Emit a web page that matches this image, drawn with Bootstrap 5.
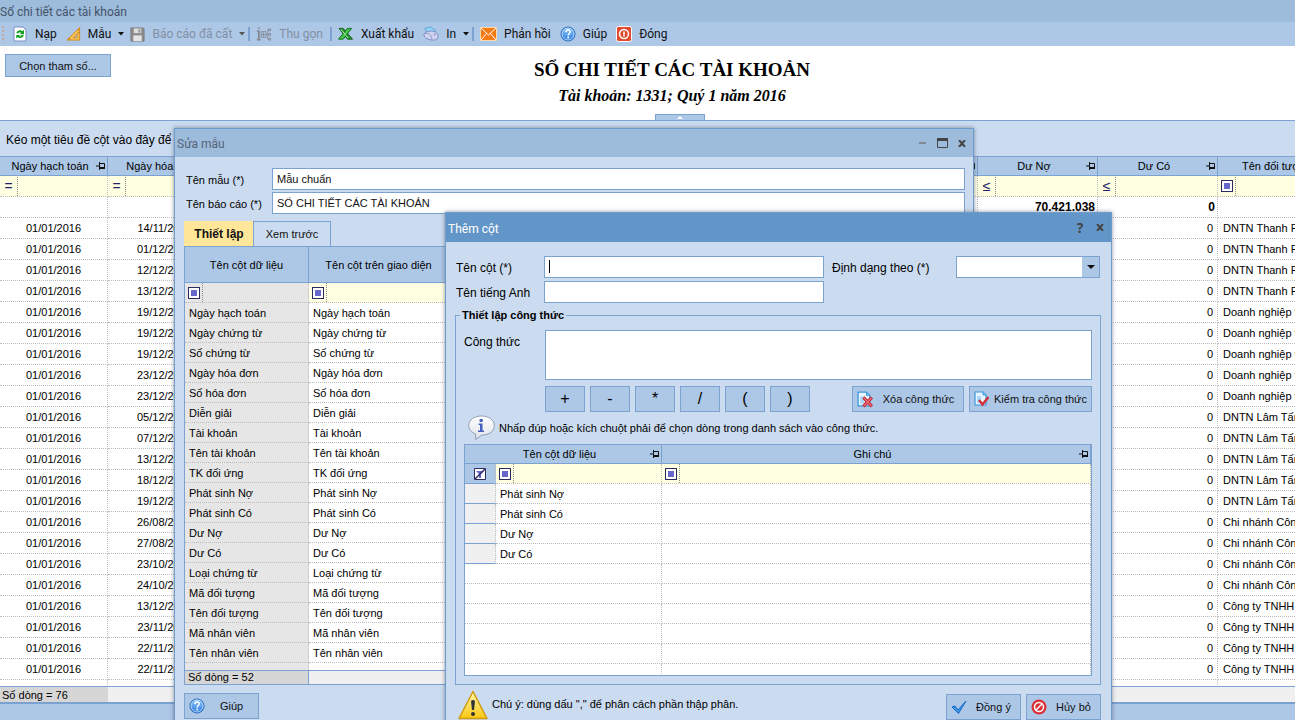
<!DOCTYPE html>
<html lang="vi">
<head>
<meta charset="utf-8">
<meta name="viewport" content="width=device-width, initial-scale=1">
<title>Sổ chi tiết các tài khoản</title>
<link href="https://cdn.jsdelivr.net/npm/bootstrap@5.3.0/dist/css/bootstrap.min.css" rel="stylesheet">
<style>
:root{--line:#7ca2d1;--bar:#adc7e7;--panel:#cbdbf0;--cap:#9dbbdb;--filter:#ffffe1;--dot:#bdbdbd}
body{font-family:"Liberation Sans",Arial,sans-serif;font-size:11px;line-height:16px;color:#000;background:#fff}
.app{height:100vh;min-height:0}
.seg{font-family:Roboto,"Open Sans",sans-serif;font-size:12px}
.caption-main{background:var(--cap);height:22px;color:#44546a;line-height:24px}
.tools{background:var(--bar);height:24px;padding-left:1px}
.tools svg{flex:none}
.tool{background:none;border:0;padding:0;margin-left:9px;color:#111;display:flex;align-items:center;gap:7px;line-height:22px}
.tool.first{margin-left:7px}
.tool.near{margin-left:6px}
.tool:disabled{color:#8390a2}
.vline{width:2px;height:14px;background:var(--line);margin-left:7px}
.vline.near{margin-left:3px}
.grip{width:4px;height:18px;background:radial-gradient(circle,#c3a9a0 1px,transparent 1px) 0 0/4px 4px}
.flat{background:var(--bar);border:1px solid var(--line);border-radius:0;color:#111;font-size:11px;line-height:16px;padding:0;height:26px}
.flat:hover{background:#bcd3ee;border-color:var(--line);color:#111}
.flat.param{width:106px;height:23px;margin:8px 0 0 5px}
.report-head{height:75px;border-bottom:1px solid var(--line);position:relative}
.report-head h1{font:bold 19px/24px "Liberation Serif",serif;margin:0}
.report-head h2{font:italic bold 16px/20px "Liberation Serif",serif;margin:4px 0 0}
.report-title{padding-top:12px}
.report-side{width:62px}
.fold{position:absolute;left:655px;bottom:0;width:50px;height:6px;padding:0;border:1px solid var(--line);border-bottom:0;background:var(--bar);display:flex;justify-content:center;align-items:center}
.group-panel{height:35px;background:var(--panel);padding:0 6px;font-size:12px;line-height:38px}
.dgrid{table-layout:fixed;border-collapse:separate;border-spacing:0;width:100%;margin:0;background:#fff}
.dgrid th,.dgrid td{padding:0 4px;white-space:nowrap;overflow:hidden;font-weight:400}
.dgrid th{background:var(--bar);border-bottom:1px solid var(--line);border-right:1px solid var(--line);border-top:1px solid var(--line);text-align:center;vertical-align:middle}
.dgrid td{border-right:1px dotted var(--dot);border-bottom:1px dotted var(--dot)}
.dgrid .frow td{background:var(--filter)}
.dgrid .total td{font-size:12px;font-weight:700;padding-right:2px}
.dgrid tr>:last-child{padding-right:0}
.dgrid th:has(.hcell){padding-right:1px}
.hcell{display:flex;align-items:center}
.hcell span{flex:1}
.book td{height:21px}
.book th{height:20px}
.book .who{padding-left:5px;border-right:0}
.book th.who{text-align:left;padding-left:24px}
.fslot{display:flex;align-items:center;justify-content:center;width:18px;height:19px;margin-left:-4px;border-right:1px dotted #888;color:#22226a;font-size:14px;font-weight:400}
.mark-box{width:12px;height:12px;border:1px solid #2b2b62;background:#6666cc;box-shadow:inset 0 0 0 2px #fff;display:block}
.who .fslot{margin-left:-5px}
.foot-line{height:18px;border-top:1px solid var(--line);border-bottom:2px solid var(--line);background:#f0f0f0;line-height:16px}
.foot-count{background:#d6d6d6;width:108px;padding-left:2px}
.status{height:16px;background:var(--bar)}
.win{position:absolute;background:var(--panel);border:1px solid #6f9bcd;box-shadow:0 0 4px rgba(60,70,90,.6)}
.win-edit{left:174px;top:128px;width:800px;bottom:-8px}
.win-col{left:445px;top:212px;width:667px;bottom:-8px}
.win-cap{height:28px;background:var(--cap);padding:0 5px 0 2px;color:#55657c}
.win-cap>span{padding-top:2px}
.win-col .win-cap{height:29px;background:#6396c8;color:#fff}
.capbtn{border:0;background:none;padding:0;width:12px;height:14px;display:flex;align-items:center;justify-content:center;color:#444;font:bold 14px/14px "Open Sans",sans-serif}
.lbl{font-size:12px;line-height:24px;height:22px;white-space:nowrap}
.edit-form .lbl{font-size:11px}
.field{border:1px solid var(--line);border-radius:0;background:#fff;color:#111;font-size:11px;line-height:16px;padding:0 4px;height:22px;width:100%}
.field:focus{outline:0}
.edit-form{display:grid;grid-template-columns:86px 1fr;row-gap:2px;padding:11px 8px 0 11px}
.edit-body{padding:7px 9px 0 9px}
.tabs{display:flex}
.tabs button{border:1px solid var(--line);border-bottom:0;border-radius:0;background:var(--panel);height:25px;font-size:11px;padding:0;width:78px;color:#111}
.tabs button.active{background:#ffe699;font-weight:700;font-size:12px;width:69px;border-right:0;border-color:#ffe699}
.mgrid{border-left:1px solid var(--line)}
.mgrid th{height:37px}
.mgrid td{height:20px}
.mgrid td:first-child{background:#e6e6e6!important}
.mgrid .tail td{height:7px;border-bottom:0}
.mfoot{height:15px;border:1px solid var(--line);background:#f0f0f0;line-height:13px}
.mfoot div{width:124px;background:#d6d6d6;border-right:1px solid var(--line);padding-left:3px}
.col-form{display:grid;grid-template-columns:88px 280px 8px 124px 144px;row-gap:3px;padding:14px 0 0 10px}
.caret{position:absolute;left:5px;top:4px;width:1px;height:13px;background:#000}
.pick{appearance:none;background:linear-gradient(var(--bar),var(--bar)) right/17px 100% no-repeat #fff}
.pick-arrow{position:absolute;right:5px;top:9px;pointer-events:none}
.setbox{border:1px solid var(--line);margin:5px 10px 0 9px;padding:0 8px 8px;height:377px}
.setbox legend{float:none;width:auto;font-size:11px;font-weight:700;line-height:14px;padding:0 2px;margin:0 0 0 -4px}
.formula{display:grid;grid-template-columns:81px 1fr;padding-top:8px}
.formula textarea{height:50px;resize:none;display:block}
.ops{display:flex;gap:5px;margin:6px 0 0 81px}
.ops .op{width:40px;font-size:16px;color:#000}
.act{width:75px}
.flat svg{flex:none}
.hint{height:32px}
.cgrid-wrap{border:1px solid var(--line);background:#fff;height:232px;overflow:hidden}
.cgrid th{height:19px;border-top:0}
.cgrid td{height:20px}
.cgrid td.sel{background:#f0f0f0;border-bottom:1px solid var(--line)}
.cgrid .frow td.sel{background:var(--bar)}
.notebar{padding:5px 10px 0 12px;height:40px}
.notebar>span{padding-top:6px}
</style>
</head>
<body>
<svg width="0" height="0" class="position-absolute" aria-hidden="true">
 <defs>
  <linearGradient id="gBlue" x1="0" y1="0" x2="0" y2="1"><stop offset="0" stop-color="#8cc4fa"/><stop offset="1" stop-color="#2f7fe0"/></linearGradient>
  <linearGradient id="gWarn" x1="0" y1="0" x2="0" y2="1"><stop offset="0" stop-color="#fff7b0"/><stop offset="1" stop-color="#fbc80e"/></linearGradient>
  <linearGradient id="gInfo" x1="0" y1="0" x2="0" y2="1"><stop offset="0" stop-color="#fff"/><stop offset="1" stop-color="#dfe3ea"/></linearGradient>
  <symbol id="pin" viewBox="0 0 10 8"><path d="M0 4h3.500M3.500 0v8M3.500 1.500h5V6" fill="none" stroke="#111"/><path d="M3.500 6h5.500" stroke="#111" stroke-width="2"/></symbol>
  <symbol id="help" viewBox="0 0 16 16"><circle cx="8" cy="8" r="7" fill="url(#gBlue)" stroke="#2162b5"/><circle cx="8" cy="8" r="6" fill="none" stroke="#c9e3ff" stroke-width=".8"/><path d="M5.900 6.200c0-3 4.300-2.900 4.300-.4 0 1.600-2 1.700-2 3.600" fill="none" stroke="#fff" stroke-width="1.500"/><circle cx="8.200" cy="11.600" r="1" fill="#fff"/></symbol>
  <symbol id="page" viewBox="0 0 16 16"><path d="M1 1h8l3 3v10H1z" fill="#e9f6ff" stroke="#3b97dc" stroke-width="1.200"/><path d="M9 1v3h3" fill="#8ecbf5" stroke="#3b97dc"/><path d="M3 5h4v7H3z" fill="#a9d8f8"/></symbol>
 </defs>
</svg>

<div class="app d-flex flex-column position-relative overflow-hidden">
 <header class="caption-main seg flex-shrink-0">Sổ chi tiết các tài khoản</header>
 <nav class="tools seg d-flex align-items-center flex-shrink-0" aria-label="Thanh công cụ">
  <span class="grip"></span>
  <button class="tool first" type="button"><svg width="16" height="16" viewBox="0 0 16 16"><path d="M2 1h9l3 3v11H2z" fill="#fff" stroke="#7b8dcf"/><path d="M4.300 7.200C4.800 3.800 9 3.400 10.200 5.200L12 4v4.300H7.600l1.500-1.500C8.300 5.900 7 6.200 6.600 7.200zM11.800 9c-.5 3.400-4.700 3.800-5.900 2L4.200 12.500V8.900h4.200L7.200 10c.8.700 2 .3 2.300-1z" fill="#12a022"/></svg>Nạp</button>
  <button class="tool" type="button"><svg width="15" height="16" viewBox="0 0 16 16"><path d="M1 14.500L14.500 1v13.500z" fill="#f6c35a" stroke="#d58a1c"/><path d="M7.500 12L12 7.500V12z" fill="#adc7e7" stroke="#d58a1c"/><path d="M3 14v-2M5 14v-1M12.500 4h1.500M12.500 6.500h1.500" stroke="#a76509" stroke-width=".8"/></svg>Mẫu<svg width="6" height="4"><path d="M0 0h6L3 3.500z" fill="#111"/></svg></button>
  <button class="tool near" type="button" disabled><svg width="15" height="15" viewBox="0 0 16 16"><path d="M1 1h13l1 1v13H1z" fill="#8d8d8d" stroke="#777"/><path d="M4 1.500h8v5H4z" fill="#ddd"/><path d="M9 2h2v4H9z" fill="#999"/><path d="M3.500 9h9v6h-9z" fill="#e4e4e4"/></svg>Báo cáo đã cất<svg width="6" height="4"><path d="M0 0h6L3 3.500z" fill="#555"/></svg></button>
  <span class="vline near"></span>
  <button class="tool near" type="button" disabled><svg width="16" height="16" viewBox="0 0 17 16" fill="none" stroke="#858b94"><path d="M3 4v10M1 5h2M1 14h4" stroke-width="2"/><path d="M2 1h2v1.500H2z" fill="#858b94" stroke="none"/><path d="M5.500 5.500h5v6h-5zM8 6.500v4M6.500 8.500h3M10.500 8.500h2M12.500 3.500v10M12.500 3.500h1M12.500 13.500h1"/><path d="M13.500 2.500h2v2h-2zM13.500 7.500h2v2h-2zM13.500 12.500h2v2h-2z"/></svg>Thu gọn</button>
  <span class="vline"></span>
  <button class="tool near" type="button"><svg width="16" height="14" viewBox="0 0 17 15"><path d="M1 1.500h4.500L15.500 13H10z" fill="#1f8f28" stroke="#0c5c14"/><path d="M14.500 1.500H10L.500 13h5z" fill="#46c24b" stroke="#0c6c14"/><path d="M3 2.500l8 9.500" stroke="#c7f2c4"/></svg>Xuất khẩu</button>
  <button class="tool" type="button"><svg width="16" height="16" viewBox="0 0 17 16"><path d="M2 2l6-1.500L13 4v3L5 8z" fill="#8fd2f5" stroke="#5aa2d8"/><path d="M1 9c0-3 4-4 8-4s7 2 7 5-2 4.500-5 4.500C6 14.500 1 12 1 9z" fill="#d0d3ee" stroke="#7f88c4"/><path d="M2 7.500c3-1 7 .5 7.500 6.500" fill="none" stroke="#8b93cc"/><circle cx="12.500" cy="8.500" r="1" fill="#8c92c8"/></svg>In<svg width="6" height="4"><path d="M0 0h6L3 3.500z" fill="#111"/></svg></button>
  <span class="vline near"></span>
  <button class="tool near" type="button"><svg width="17" height="14" viewBox="0 0 17 14"><path d="M.500.500h16v13H.500z" fill="#f47a12" stroke="#ffd9ae"/><path d="M1 1l7.500 7L16 1M1 13l5.500-6.500M16 13l-5.500-6.500" fill="none" stroke="#fff"/></svg>Phản hồi</button>
  <button class="tool" type="button"><svg width="16" height="16"><use href="#help"/></svg>Giúp</button>
  <button class="tool" type="button"><svg width="16" height="16" viewBox="0 0 16 16"><rect x=".5" y=".5" width="15" height="15" rx="2" fill="#e2492b" stroke="#fff"/><circle cx="8" cy="8" r="4.500" fill="none" stroke="#fff" stroke-width="1.500"/><path d="M8 5.500v5" stroke="#fff" stroke-width="1.500"/></svg>Đóng</button>
 </nav>
 <section class="report-head flex-shrink-0 d-flex align-items-start">
  <button class="btn flat param" type="button">Chọn tham số...</button>
  <div class="report-title flex-fill text-center"><h1>SỔ CHI TIẾT CÁC TÀI KHOẢN</h1><h2>Tài khoản: 1331; Quý 1 năm 2016</h2></div>
  <div class="report-side"></div>
  <button class="fold" type="button" aria-label="Thu gọn"><svg width="6" height="3"><path d="M0 3h6L3 0z" fill="#fff"/></svg></button>
 </section>
 <div class="group-panel flex-shrink-0">Kéo một tiêu đề cột vào đây để</div>
 <main class="flex-fill overflow-hidden">
  <table class="dgrid book">
   <colgroup><col style="width:108px"><col style="width:114px"><col><col style="width:120px"><col style="width:120px"><col style="width:77px"></colgroup>
   <thead><tr>
    <th><div class="hcell"><span>Ngày hạch toán</span><svg width="10" height="8"><use href="#pin"/></svg></div></th>
    <th><div class="hcell"><span>Ngày hóa đơn</span><svg width="10" height="8"><use href="#pin"/></svg></div></th>
    <th><div class="hcell"><span></span><svg width="10" height="8"><use href="#pin"/></svg></div></th>
    <th><div class="hcell"><span>Dư Nợ</span><svg width="10" height="8"><use href="#pin"/></svg></div></th>
    <th><div class="hcell"><span>Dư Có</span><svg width="10" height="8"><use href="#pin"/></svg></div></th>
    <th class="who">Tên đối tượng</th>
   </tr></thead>
   <tbody id="book">
    <tr class="frow"><td><span class="fslot">=</span></td><td><span class="fslot">=</span></td><td></td><td><span class="fslot">≤</span></td><td><span class="fslot">≤</span></td><td class="who"><span class="fslot"><i class="mark-box"></i></span></td></tr>
    <tr class="total"><td></td><td></td><td></td><td class="text-end">70.421.038</td><td class="text-end">0</td><td class="who"></td></tr>
   </tbody>
  </table>
 </main>
 <div class="foot-line flex-shrink-0 d-flex"><div class="foot-count">Số dòng = 76</div></div>
 <div class="status flex-shrink-0"></div>

 <section class="win win-edit" role="dialog" aria-label="Sửa mẫu">
  <div class="win-cap seg d-flex align-items-center"><span class="flex-fill">Sửa mẫu</span>
   <button class="capbtn" type="button" aria-label="Thu nhỏ"><svg width="7" height="2"><path d="M0 0h7v2H0z" fill="#848a92"/></svg></button>
   <button class="capbtn ms-2" type="button" aria-label="Phóng to"><svg width="11" height="10"><path d="M.500.500h10v9H.500z" fill="none" stroke="#444"/><path d="M0 0h11v3H0z" fill="#444"/></svg></button>
   <button class="capbtn ms-2" type="button" aria-label="Đóng"><svg width="8" height="7"><path d="M1 0l6 7M7 0L1 7" stroke="#444" stroke-width="2"/></svg></button></div>
  <div class="edit-form">
   <label class="lbl" for="tm">Tên mẫu (*)</label><input class="field" id="tm" value="Mẫu chuẩn">
   <label class="lbl" for="tb">Tên báo cáo (*)</label><input class="field" id="tb" value="SỔ CHI TIẾT CÁC TÀI KHOẢN">
  </div>
  <div class="edit-body">
   <div class="tabs"><button type="button" class="active">Thiết lập</button><button type="button">Xem trước</button></div>
   <table class="dgrid mgrid"><colgroup><col style="width:124px"><col style="width:140px"><col></colgroup>
    <thead><tr><th>Tên cột dữ liệu</th><th>Tên cột trên giao diện</th><th></th></tr></thead>
    <tbody id="model"><tr class="frow"><td><span class="fslot"><i class="mark-box"></i></span></td><td><span class="fslot"><i class="mark-box"></i></span></td><td></td></tr></tbody></table>
   <div class="mfoot d-flex"><div>Số dòng = 52</div></div>
   <button class="btn flat act d-flex align-items-center mt-2" type="button"><svg class="ms-1" width="16" height="16"><use href="#help"/></svg><span class="flex-fill">Giúp</span></button>
  </div>
 </section>

 <section class="win win-col" role="dialog" aria-label="Thêm cột">
  <div class="win-cap seg d-flex align-items-center"><span class="flex-fill">Thêm cột</span>
   <button class="capbtn" type="button" aria-label="Trợ giúp">?</button>
   <button class="capbtn ms-2" type="button" aria-label="Đóng"><svg width="8" height="7"><path d="M1 0l6 7M7 0L1 7" stroke="#444" stroke-width="2"/></svg></button></div>
  <div class="col-form">
   <label class="lbl" for="tc">Tên cột (*)</label><div class="position-relative"><input class="field" id="tc"><i class="caret"></i></div><span></span>
   <label class="lbl" for="dd">Định dạng theo (*)</label><div class="position-relative"><select class="field pick" id="dd"><option></option></select><svg class="pick-arrow" width="8" height="4"><path d="M0 0h8L4 4z" fill="#111"/></svg></div>
   <label class="lbl" for="ta">Tên tiếng Anh</label><input class="field" id="ta">
  </div>
  <fieldset class="setbox"><legend>Thiết lập công thức</legend>
   <div class="formula"><label class="lbl" for="ct">Công thức</label><textarea class="field" id="ct"></textarea></div>
   <div class="ops"><button class="btn flat op" type="button">+</button><button class="btn flat op" type="button">-</button><button class="btn flat op" type="button">*</button><button class="btn flat op" type="button">/</button><button class="btn flat op" type="button">(</button><button class="btn flat op" type="button">)</button>
    <button class="btn flat d-flex align-items-center ms-auto" type="button" style="width:112px"><svg class="ms-1" width="17" height="17" viewBox="0 0 16 16"><use href="#page"/><path d="M6 6l8 8.500M14 6l-8 8.500" stroke="#c9293a" stroke-width="3"/><path d="M6.500 6.500l7 7.500M13.500 6.500l-7 7.500" stroke="#f07680"/></svg><span class="flex-fill">Xóa công thức</span></button>
    <button class="btn flat d-flex align-items-center" type="button" style="width:123px"><svg class="ms-1" width="16" height="16" viewBox="0 0 16 16"><use href="#page"/><path d="M5 9l3.500 4.500L14.500 6" fill="none" stroke="#d0313c" stroke-width="2.500"/></svg><span class="flex-fill">Kiểm tra công thức</span></button></div>
   <div class="hint d-flex align-items-center"><svg class="ms-1 me-1" width="27" height="26" viewBox="0 0 27 26"><path d="M13.500 1C6 1 .7 5 .7 10.500c0 4 3 7 7 8.500L7.500 24.500 14 20c7.500 0 12.300-4 12.300-9.500S21 1 13.500 1z" fill="url(#gInfo)" stroke="#8f9bb0"/><path d="M10.500 8.500h4v7h1.500v1.500h-6v-1.500H12V10h-1.500z" fill="#4560c0"/><circle cx="13.200" cy="5.500" r="1.800" fill="#4560c0"/></svg><span>Nhấp đúp hoặc kích chuột phải để chọn dòng trong danh sách vào công thức.</span></div>
   <div class="cgrid-wrap"><table class="dgrid cgrid"><colgroup><col style="width:31px"><col style="width:166px"><col></colgroup>
    <thead><tr><th colspan="2"><div class="hcell"><span>Tên cột dữ liệu</span><svg width="10" height="8"><use href="#pin"/></svg></div></th><th><div class="hcell"><span>Ghi chú</span><svg width="10" height="8"><use href="#pin"/></svg></div></th></tr></thead>
    <tbody id="cols"><tr class="frow"><td class="sel"><svg class="d-block mx-auto" width="12" height="12" viewBox="0 0 12 12"><path d="M.500.500h11v11H.500z" fill="#fff" stroke="#2b2b62"/><path d="M2 3h8L7 6v4H5V6z" fill="#6666cc"/><path d="M1 11L11 1" stroke="#2b2b62" stroke-width="1.500"/></svg></td><td><span class="fslot"><i class="mark-box"></i></span></td><td><span class="fslot"><i class="mark-box"></i></span></td></tr></tbody></table></div>
  </fieldset>
  <div class="notebar d-flex align-items-start">
   <svg width="30" height="30" viewBox="0 0 30 30"><path d="M15 1.500L29 28.500H1z" fill="url(#gWarn)" stroke="#d19a10" stroke-width="1.500" stroke-linejoin="round"/><path d="M13 11q2-2 4 0l-1 9h-2z" fill="#333"/><circle cx="15" cy="24" r="2" fill="#333"/></svg>
   <span class="flex-fill ms-1">Chú ý: dùng dấu "," để phân cách phần thập phân.</span>
   <button class="btn flat act d-flex align-items-center mt-1" type="button"><svg class="ms-1" width="16" height="16" viewBox="0 0 16 16"><path d="M1 8l3-1 3 4 8-9-7.500 12.500z" fill="#3f9bea" stroke="#1767c2" stroke-linejoin="round"/></svg><span class="flex-fill">Đồng ý</span></button>
   <button class="btn flat act d-flex align-items-center mt-1" type="button" style="margin-left:5px"><svg class="ms-1" width="16" height="16" viewBox="0 0 16 16"><circle cx="8" cy="8" r="7.500" fill="#dc2f36"/><circle cx="8" cy="8" r="4.500" fill="none" stroke="#fff" stroke-width="1.500"/><path d="M5 11l6-6" stroke="#fff" stroke-width="1.500"/></svg><span class="flex-fill">Hủy bỏ</span></button>
  </div>
 </section>
</div>
<script>
const dates=['14/11','01/12','12/12','13/12','19/12','19/12','19/12','23/12','23/12','05/12','07/12','13/12','18/12','19/12','26/08','27/08','23/10','24/10','13/12','23/11','22/11','22/11'];
const who=i=>i<4?'DNTN Thanh Phong':i<9?'Doanh nghiệp tư nhân':i<14?'DNTN Lâm Tấn':i<18?'Chi nhánh Công ty':'Công ty TNHH';
document.getElementById('book').insertAdjacentHTML('beforeend',dates.map((d,i)=>`<tr><td class="text-center">01/01/2016</td><td class="text-center">${d}/2016</td><td></td><td></td><td class="text-end pe-1">0</td><td class="who">${who(i)}</td></tr>`).join('')+'<tr><td></td><td></td><td></td><td></td><td></td><td class="who"></td></tr>');
const names=['Ngày hạch toán','Ngày chứng từ','Số chứng từ','Ngày hóa đơn','Số hóa đơn','Diễn giải','Tài khoản','Tên tài khoản','TK đối ứng','Phát sinh Nợ','Phát sinh Có','Dư Nợ','Dư Có','Loại chứng từ','Mã đối tượng','Tên đối tượng','Mã nhân viên','Tên nhân viên'];
document.getElementById('model').insertAdjacentHTML('beforeend',names.map(n=>`<tr><td>${n}</td><td>${n}</td><td></td></tr>`).join('')+'<tr class="tail"><td></td><td></td><td></td></tr>');
document.getElementById('cols').insertAdjacentHTML('beforeend',['Phát sinh Nợ','Phát sinh Có','Dư Nợ','Dư Có'].map(n=>`<tr><td class="sel"></td><td>${n}</td><td></td></tr>`).join('')+'<tr><td colspan="2"></td><td></td></tr>'.repeat(6));
</script>
<script src="https://cdn.jsdelivr.net/npm/bootstrap@5.3.0/dist/js/bootstrap.bundle.min.js"></script>
</body>
</html>
